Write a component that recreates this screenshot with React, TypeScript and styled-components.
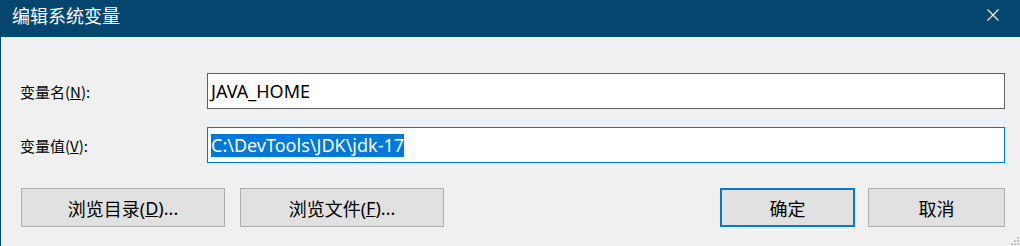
import styled, { createGlobalStyle } from 'styled-components';

const GlobalStyle = createGlobalStyle`
  html, body {
    margin: 0;
    padding: 0;
    background: #f0f0f0;
  }
`;

const Dialog = styled.div`
  position: relative;
  width: 1020px;
  height: 246px;
  box-sizing: border-box;
  border-left: 1px solid #05466f;
  background: #f0f0f0;
  display: flex;
  flex-direction: column;
  overflow: hidden;
  font-family: "Noto Sans", "Noto Sans CJK SC", sans-serif;
  color: #000;
`;

const TitleBar = styled.div`
  height: 37px;
  box-sizing: border-box;
  padding: 0 12px 8px 11px;
  background: #05466f;
  display: flex;
  align-items: center;
  justify-content: space-between;
  color: #fff;
`;

const Title = styled.span`
  font-family: "Noto Sans CJK SC", sans-serif;
  font-size: 18px;
  line-height: 1;
`;

const CloseButton = styled.div`
  width: 30px;
  height: 22px;
  display: flex;
  align-items: center;
  justify-content: center;
`;

const Body = styled.div`
  flex: 1;
  padding: 36px 15px 0 19px;
  display: flex;
  flex-direction: column;
`;

const Form = styled.div`
  display: grid;
  grid-template-columns: 187px 1fr;
  grid-auto-rows: 36px;
  row-gap: 18px;
  align-items: center;
`;

const Label = styled.label`
  font-family: "Noto Sans CJK SC", sans-serif;
  font-size: 15px;
  line-height: 1;
`;

const Field = styled.div<{ $focused?: boolean }>`
  height: 36px;
  box-sizing: border-box;
  border: 1px solid ${(p) => (p.$focused ? '#0078d7' : '#5f5f5f')};
  background: #fff;
  padding: 0 3px;
  display: flex;
  align-items: center;
  font-size: 18px;
  white-space: nowrap;
`;

const Selected = styled.span`
  background: #0078d7;
  color: #fff;
  line-height: 23px;
`;

const ButtonRow = styled.div`
  margin-top: 25px;
  display: flex;
  justify-content: space-between;
`;

const ButtonGroup = styled.div<{ $gap: number }>`
  display: flex;
  gap: ${(p) => p.$gap}px;
  padding-left: ${(p) => (p.$gap === 15 ? 1 : 0)}px;
`;

const Button = styled.button<{ $width: number; $default?: boolean }>`
  width: ${(p) => p.$width}px;
  height: 39px;
  box-sizing: border-box;
  margin: 0;
  padding: 0;
  background: #e1e1e1;
  border: ${(p) => (p.$default ? '2px solid #0078d7' : '1px solid #adadad')};
  font-family: "Noto Sans", "Noto Sans CJK SC", sans-serif;
  font-size: 18px;
  color: #000;
  display: flex;
  align-items: center;
  justify-content: center;
`;

const Grip = styled.svg`
  position: absolute;
  right: 0;
  bottom: 0;
`;

const App = () => {
  return (
    <>
      <GlobalStyle />
      <Dialog>
        <TitleBar>
          <Title>编辑系统变量</Title>
          <CloseButton>
            <svg width="12" height="12" viewBox="0 0 12 12">
              <path d="M0.5 0.5 L11.5 11.5 M11.5 0.5 L0.5 11.5" stroke="#fff" strokeWidth="1.1" />
            </svg>
          </CloseButton>
        </TitleBar>
        <Body>
          <Form>
            <Label>
              变量名(<u>N</u>):
            </Label>
            <Field>JAVA_HOME</Field>
            <Label>
              变量值(<u>V</u>):
            </Label>
            <Field $focused>
              <Selected>C:\DevTools\JDK\jdk-17</Selected>
            </Field>
          </Form>
          <ButtonRow>
            <ButtonGroup $gap={15}>
              <Button $width={204}>
                浏览目录(<u>D</u>)...
              </Button>
              <Button $width={204}>
                浏览文件(<u>F</u>)...
              </Button>
            </ButtonGroup>
            <ButtonGroup $gap={13}>
              <Button $width={135} $default>
                确定
              </Button>
              <Button $width={137}>取消</Button>
            </ButtonGroup>
          </ButtonRow>
        </Body>
        <Grip width="12" height="12" viewBox="0 0 12 12">
          <rect x="9" y="3" width="2" height="2" fill="#c4c4c4" />
          <rect x="6" y="6" width="2" height="2" fill="#c4c4c4" />
          <rect x="9" y="6" width="2" height="2" fill="#c4c4c4" />
          <rect x="3" y="9" width="2" height="2" fill="#c4c4c4" />
          <rect x="6" y="9" width="2" height="2" fill="#c4c4c4" />
          <rect x="9" y="9" width="2" height="2" fill="#c4c4c4" />
        </Grip>
      </Dialog>
    </>
  );
};

export default App;
